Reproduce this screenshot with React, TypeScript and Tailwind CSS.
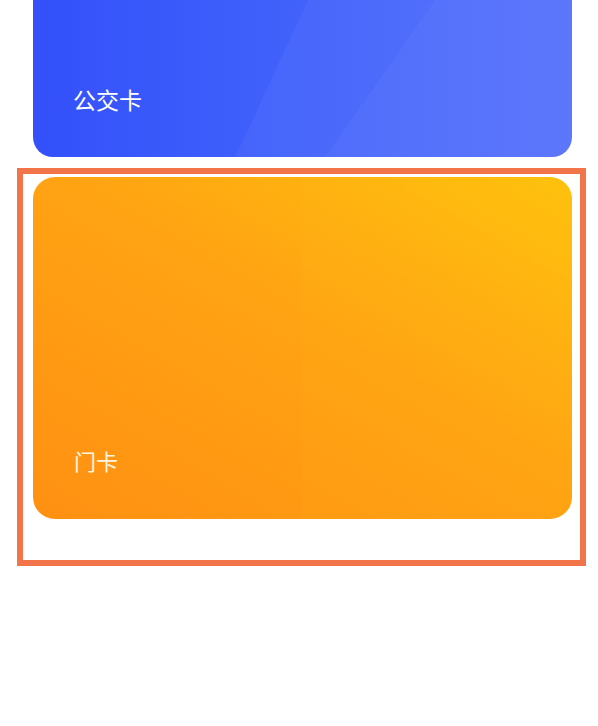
export default function App() {
  return (
    <div
      className="w-[598px] h-[726px] bg-white overflow-hidden"
      style={{ fontFamily: '"Noto Sans CJK SC", "Noto Sans", sans-serif' }}
    >
      {/* bus card, top cut off by the viewport */}
      <div className="ml-[33px] w-[539px] h-[157px] rounded-b-[20px] relative overflow-hidden bg-gradient-to-r from-[#3350fa] via-[#4262fb] to-[#516dfb]">
        <div className="absolute inset-0 bg-[linear-gradient(115deg,transparent_0%,transparent_45%,rgba(255,255,255,0.04)_45%,rgba(255,255,255,0.04)_100%)]" />
        <div className="absolute inset-0 bg-[linear-gradient(125deg,transparent_0%,transparent_62%,rgba(255,255,255,0.03)_62%,rgba(255,255,255,0.03)_100%)]" />
        <span className="absolute left-[40px] top-[85px] text-[23px] leading-[28px] text-white">公交卡</span>
      </div>

      {/* highlighted door card */}
      <div className="ml-[17px] mt-[11px] w-[569px] h-[398px] border-[6px] border-[#f2754a] pl-[10px] pt-[3px]">
        <div className="w-[539px] h-[342px] rounded-[22px] relative overflow-hidden bg-[linear-gradient(30deg,#ff9012_0%,#ffa313_55%,#ffc20c_100%)]">
          <div className="absolute inset-y-0 right-0 w-[270px] bg-[rgba(255,200,40,0.06)]" />
          <span className="absolute left-[41px] top-[269px] text-[22px] leading-[28px] text-[#fff6e0]">门卡</span>
        </div>
      </div>
    </div>
  )
}
